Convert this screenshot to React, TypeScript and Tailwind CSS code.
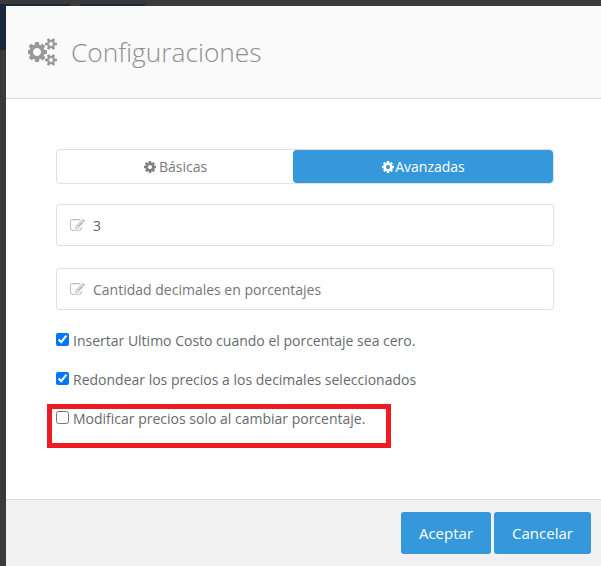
import React from "react";

const COG = "M1152 896q0-106-75-181t-181-75-181 75-75 181 75 181 181 75 181-75 75-181zm512-109v222q0 12-8 23t-20 13l-185 28q-19 54-39 91 35 50 107 138 10 12 10 25t-9 23q-27 37-99 108t-94 71q-12 0-26-9l-138-108q-44 23-91 38-16 136-29 186-7 28-36 28h-222q-14 0-24.5-8.5t-11.5-21.5l-28-184q-49-16-90-37l-141 107q-10 9-25 9-14 0-25-11-126-114-165-168-7-10-7-23 0-12 8-23 15-21 51-66.5t54-70.5q-27-50-41-99l-183-27q-13-2-21-12.5t-8-23.5v-222q0-12 8-23t19-13l186-28q14-46 39-92-40-57-107-138-10-12-10-24 0-10 9-23 26-36 98.5-107.5t94.5-71.5q13 0 26 10l138 107q44-23 91-38 16-136 29-186 7-28 36-28h222q14 0 24.5 8.5t11.5 21.5l28 184q49 16 90 37l142-107q9-9 24-9 13 0 25 10 129 119 165 170 7 8 7 22 0 12-8 23-15 21-51 66.5t-54 70.5q26 50 41 98l183 28q13 2 21 12.5t8 23.5z";
const COGS = "M832 896q0-106-75-181t-181-75-181 75-75 181 75 181 181 75 181-75 75-181zm768 512q0-52-38-90t-90-38-90 38-38 90q0 53 37.5 90.5t90.5 37.5 90.5-37.5 37.5-90.5zm0-1024q0-52-38-90t-90-38-90 38-38 90q0 53 37.5 90.5t90.5 37.5 90.5-37.5 37.5-90.5zm-384 421v185q0 10-7 19.5t-16 10.5l-155 24q-11 35-32 76 34 48 90 115 7 11 7 20 0 12-7 19-23 30-82.5 89.5t-78.5 59.5q-11 0-21-7l-115-90q-37 19-77 31-11 108-23 155-7 24-30 24h-186q-11 0-20-7.5t-10-17.5l-23-153q-34-10-75-31l-118 89q-7 7-20 7-11 0-21-8-144-133-144-160 0-9 7-19 10-14 41-53t47-61q-23-44-35-82l-152-24q-10-1-17-9.5t-7-19.5v-185q0-10 7-19.5t16-10.5l155-24q11-35 32-76-34-48-90-115-7-11-7-20 0-12 7-20 22-30 82-89t79-59q11 0 21 7l115 90q34-18 77-32 11-108 23-154 7-24 30-24h186q11 0 20 7.5t10 17.5l23 153q34 10 75 31l118-89q8-7 20-7 11 0 21 8 144 133 144 160 0 8-7 19-12 16-42 54t-45 60q23 48 34 82l152 23q10 2 17 10.5t7 19.5zm640 533v140q0 16-149 31-12 27-30 52 51 113 51 138 0 4-4 7-122 71-124 71-8 0-46-47t-52-68q-20 2-30 2t-30-2q-14 21-52 68t-46 47q-2 0-124-71-4-3-4-7 0-25 51-138-18-25-30-52-149-15-149-31v-140q0-16 149-31 13-29 30-52-51-113-51-138 0-4 4-7 4-2 35-20t59-34 30-16q8 0 46 46.5t52 67.5q20-2 30-2t30 2q51-71 92-112l6-2q4 0 124 70 4 3 4 7 0 25-51 138 17 23 30 52 149 15 149 31zm0-1024v140q0 16-149 31-12 27-30 52 51 113 51 138 0 4-4 7-122 71-124 71-8 0-46-47t-52-68q-20 2-30 2t-30-2q-14 21-52 68t-46 47q-2 0-124-71-4-3-4-7 0-25 51-138-18-25-30-52-149-15-149-31v-140q0-16 149-31 13-29 30-52-51-113-51-138 0-4 4-7 4-2 35-20t59-34 30-16q8 0 46 46.5t52 67.5q20-2 30-2t30 2q51-71 92-112l6-2q4 0 124 70 4 3 4 7 0 25-51 138 17 23 30 52 149 15 149 31z";
const EDIT = "M888 1184l116-116-152-152-116 116v56h96v96h56zm440-720q-16-16-33 1l-350 350q-17 17-1 33t33-1l350-350q17-17 1-33zm80 594v190q0 119-84.5 203.5t-203.5 84.5h-832q-119 0-203.5-84.5t-84.5-203.5v-832q0-119 84.5-203.5t203.5-84.5h832q63 0 117 25 15 7 18 23 3 17-9 29l-49 49q-14 14-32 8-23-6-45-6h-832q-66 0-113 47t-47 113v832q0 66 47 113t113 47h832q66 0 113-47t47-113v-126q0-13 9-22l64-64q15-15 35-7t20 29zm-96-738l288 288-672 672h-288v-288zm444 132l-92 92-288-288 92-92q28-28 68-28t68 28l152 152q28 28 28 68t-28 68z";

function Icon({ d, box, className }: { d: string; box: string; className: string }) {
  return (
    <svg viewBox={box} className={className} fill="currentColor" aria-hidden="true">
      <path d={d} />
    </svg>
  );
}

function Check({ checked, label }: { checked: boolean; label: string }) {
  return (
    <label className="flex items-start h-[19px] text-[14px] leading-[19px] text-[#676a6c]">
      <input type="checkbox" defaultChecked={checked} className="w-[13px] h-[13px] mt-[2px] mr-[4px] accent-[#0075ff]" />
      <span>{label}</span>
    </label>
  );
}

function Field({ value, placeholder }: { value?: string; placeholder?: string }) {
  return (
    <div className="flex items-center h-[42px] border border-[#e0e0e0] rounded-[3px] bg-white pl-[13px] text-[14px]">
      <Icon d={EDIT} box="0 0 1792 1792" className="w-[15px] h-[15px] text-[#c0c0c0] mr-[8px]" />
      <span className={value ? "text-[#5f5f5f]" : "text-[#757575]"}>{value ?? placeholder}</span>
    </div>
  );
}

export default function App() {
  return (
    <div className="relative h-[566px] w-[601px] overflow-hidden bg-[#3a3a3a] pl-[6px] pt-[6px] font-['Open_Sans',sans-serif]">
      <div className="absolute left-0 top-[4px] w-[70px] h-[46px] bg-[#17293a]" />
      <div className="absolute left-[80px] top-[4px] w-[65px] h-[46px] bg-[#17293a]" />
      <div className="relative h-[560px] bg-white flex flex-col rounded-tl-[3px]">
        <div className="h-[93px] shrink-0 bg-[#fafafa] border-b border-[#dddddd] flex items-center pl-[21px]">
          <Icon d={COGS} box="0 0 1920 1792" className="w-[30px] h-[28px] ml-[1px] text-[#999999] mr-[13px]" />
          <h1 className="text-[26.3px] font-light text-[#8f8f8f] leading-none">Configuraciones</h1>
        </div>
        <div className="flex-1 pl-[50px] pr-[47px] pt-[50px]">
          <div className="flex h-[35px] border border-[#e0e0e0] rounded-[4px] text-[14px]">
            <div className="w-[236px] flex items-center justify-center text-[#7a7a7a] gap-[2px]">
              <Icon d={COG} box="0 0 1792 1792" className="w-[14px] h-[14px] text-[#808080]" />
              <span>Básicas</span>
            </div>
            <div className="flex-1 flex items-center justify-center bg-[#3498db] text-white rounded-[4px] font-medium">
              <Icon d={COG} box="0 0 1792 1792" className="w-[14px] h-[14px]" />
              <span>Avanzadas</span>
            </div>
          </div>
          <div className="mt-[20px]"><Field value="3" /></div>
          <div className="mt-[22px]"><Field placeholder="Cantidad decimales en porcentajes" /></div>
          <div className="mt-[21px] flex flex-col gap-[20px]">
            <Check checked label="Insertar Ultimo Costo cuando el porcentaje sea cero." />
            <Check checked label="Redondear los precios a los decimales seleccionados" />
            <div className="relative">
              <Check checked={false} label="Modificar precios solo al cambiar porcentaje." />
              <div className="absolute left-[-9px] top-[-5px] w-[344px] h-[44px] border-[5px] border-[#ed1c24] pointer-events-none" />
            </div>
          </div>
        </div>
        <div className="h-[67px] shrink-0 bg-[#f1f1f1] border-t border-[#dddddd] flex items-start justify-end gap-[3px] pt-[12px] pr-[10px]">
          <button className="w-[90px] h-[42px] rounded-[3px] bg-[#3498db] text-white text-[15px]">Aceptar</button>
          <button className="w-[97px] h-[42px] rounded-[3px] bg-[#3498db] text-white text-[15px]">Cancelar</button>
        </div>
      </div>
    </div>
  );
}
